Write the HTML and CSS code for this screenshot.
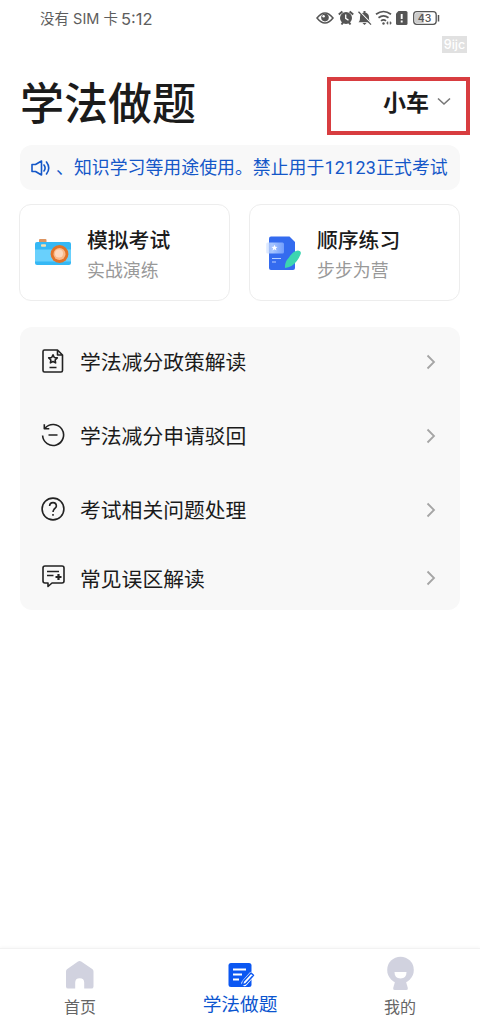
FILE: index.html
```html
<!DOCTYPE html>
<html lang="zh-CN">
<head>
<meta charset="utf-8">
<title>学法做题</title>
<link rel="stylesheet" href="styles.css">
</head>
<body>
<div class="screen">
  <div class="status">
    <span class="carrier">没有 SIM 卡</span><span class="clock">5:12</span>
    <svg class="status-icons" width="126" height="20" viewBox="315 8 126 20" fill="none" stroke="#555" stroke-width="1.5">
      <path d="M317 18q8-10 16 0q-8 10-16 0z"/><circle cx="325" cy="17.6" r="3.8" fill="#555" stroke="none"/><circle cx="323.600" cy="16.200" r="1.2" fill="#fff" stroke="none"/>
      <circle cx="346" cy="18" r="6" fill="#555" stroke="none"/><path d="M338.8 14.5l3.6-3M353.200 14.500l-3.600-3M341.500 24.500l1.500-2M350.500 24.500l-1.500-2" stroke-width="2"/><path d="M345.700 14.500v3.800l2.800 2" stroke="#fff" stroke-width="1.300"/>
      <path d="M358.500 22.300c1.500-1.300 1.500-3 1.500-5.300 0-6 9-6 9 0 0 2.300 0 4 1.500 5.300zM362.500 23h4l-2 2zM363.500 11h2v2h-2z" fill="#555" stroke="none"/><path d="M359.500 11.500l12 12.300" stroke="#fff" stroke-width="1.300"/><path d="M358.500 11.800l12.500 12.800" stroke-width="1.300"/>
      <path d="M376 14.300q7.500-5.600 15 0M378.500 17.700q5-3.800 10 0M381 20.800q2.500-2 5 0" stroke-width="1.700"/><circle cx="383.500" cy="23.500" r="1.200" fill="#555" stroke="none"/><path d="M386.500 23l1.500-1.400v2.800zM391.500 23l-1.500-1.400v2.800z" fill="#555" stroke-width=".5"/>
      <path d="M398.500 11h7.500q1.500 0 1.500 1.500v11q0 1.500-1.500 1.500h-8.500q-1.500 0-1.500-1.500v-10z" fill="#555" stroke="none"/><path d="M401.700 14v5M401.700 20.500v2" stroke="#fff" stroke-width="1.900"/>
      <rect x="413.700" y="11.700" width="22.500" height="12.600" rx="3" stroke-width="1.300"/><rect x="415" y="13" width="9" height="10" rx="1.500" fill="#ccc" stroke="none"/><path d="M438.500 15v6.500"/>
      <text x="424.500" y="22" text-anchor="middle" class="battery">43</text>
    </svg>
  </div>
  <div class="mark-row"><span class="mark">9ijc</span></div>
  <header class="header">
    <h1>学法做题</h1>
    <div class="picker"><span class="picker-text">小车</span>
      <svg width="14" height="9" viewBox="0 0 14 9" fill="none" stroke="#777" stroke-width="1.600"><path d="M1 1.500l6 5.500 6-5.500"/></svg>
    </div>
  </header>
  <div class="notice">
    <svg width="20" height="18" viewBox="0 0 20 18" fill="none" stroke="#1457c8" stroke-width="1.600" stroke-linecap="round" stroke-linejoin="round"><path d="M1 5.500h3.500L10.500 2v14l-6-3.500H1z"/><path d="M13 6q2.200 3 0 6M15.500 3q4.500 6 0 12"/></svg>
    <span class="notice-text">、知识学习等用途使用。禁止用于<span class="digits">12123</span>正式考试</span>
  </div>
  <div class="cards">
    <div class="card">
      <svg width="38" height="38" viewBox="35 233 38 38"><rect x="40" y="238" width="7.500" height="5" rx="1" fill="#dd9460"/><rect x="36" y="241" width="36" height="23" rx="2" fill="#35b8f5"/><path d="M36 248.500h36v12H36z" fill="#69d0fc"/><rect x="42" y="243.300" width="5" height="2.500" rx=".8" fill="#f5dfb0"/><circle cx="60.500" cy="253" r="8.900" fill="#e07228"/><circle cx="60.500" cy="253" r="6" fill="#fbb98a"/><circle cx="60" cy="252.500" r="4" fill="#fdd8bd"/></svg>
      <div class="card-copy"><div class="card-title">模拟考试</div><div class="card-sub">实战演练</div></div>
    </div>
    <div class="card">
      <svg width="38" height="38" viewBox="265 233 38 38"><defs><linearGradient id="tag"><stop offset="0" stop-color="#d7e5ff" stop-opacity=".55"/><stop offset=".35" stop-color="#a6c5ff"/><stop offset="1" stop-color="#729dfb"/></linearGradient></defs><path d="M272 235.500h18.500l5.500 5.500v26q0 2-2 2h-22q-2 0-2-2v-29.500q0-2 2-2z" fill="#346bef"/><rect x="267" y="241.500" width="18" height="11" rx="1.500" fill="url(#tag)"/><path d="M275.500 243.700l.9 2 2.100.2-1.600 1.400.5 2.100-1.900-1.100-1.900 1.100.5-2.100-1.600-1.400 2.100-.2z" fill="#fff"/><path d="M273 257.500h9M273 261h4" stroke="#b7d0ff" stroke-width="1.200"/><path d="M286 267q-.5-6 4-10.500 4-6.500 9-7 4 .5 2.500 4-3 7.500-9 11.500-3 1.500-6.500 2z" fill="#3cd5b0"/></svg>
      <div class="card-copy"><div class="card-title">顺序练习</div><div class="card-sub">步步为营</div></div>
    </div>
  </div>
  <div class="list">
    <div class="row">
      <svg class="row-icon" viewBox="0 0 24 24"><path d="M3.500 1h13l5 5v15.500q0 1.500-1.500 1.500H3.500Q2 23 2 21.500v-19Q2 1 3.500 1zM16.500 1v5h5M8.500 18.500h7"/><path d="M12 5.800l1.300 2.700 3 .4-2.200 2.100.5 2.900-2.600-1.400-2.600 1.400.5-2.900-2.200-2.100 3-.4z"/></svg>
      <span class="row-text">学法减分政策解读</span><svg class="chev" viewBox="0 0 10 16"><path d="M1.500 1.500L8 8l-6.500 6.500"/></svg>
    </div>
    <div class="row">
      <svg class="row-icon" viewBox="0 0 24 24"><path d="M1.600 12.500A10.500 10.500 0 1 0 4.200 5M3.300 1.300v4.500h5M7.500 12h9"/></svg>
      <span class="row-text">学法减分申请驳回</span><svg class="chev" viewBox="0 0 10 16"><path d="M1.500 1.500L8 8l-6.500 6.500"/></svg>
    </div>
    <div class="row">
      <svg class="row-icon" viewBox="0 0 24 24"><circle cx="12" cy="12" r="10.900"/><path d="M8.600 9q.2-3.400 3.400-3.400T15.400 9c0 2.400-3.400 2.600-3.400 6M12 17v1.800"/></svg>
      <span class="row-text">考试相关问题处理</span><svg class="chev" viewBox="0 0 10 16"><path d="M1.500 1.500L8 8l-6.500 6.500"/></svg>
    </div>
    <div class="row last">
      <svg class="row-icon" viewBox="0 0 24 24"><path d="M4 1h17q2 0 2 2v13q0 2-2 2H11l-4 3.500V18H4q-2 0-2-2V3q0-2 2-2zM6 6.500h12M6 10.500h6.500"/><path d="M17.500 9v6M14.500 12h6" stroke-width="2.200"/></svg>
      <span class="row-text">常见误区解读</span><svg class="chev" viewBox="0 0 10 16"><path d="M1.500 1.500L8 8l-6.500 6.500"/></svg>
    </div>
  </div>
  <nav class="tabs">
    <div class="tab">
      <svg width="30" height="30" viewBox="65 960 30 30"><path d="M78 961.600q1.600-1 3.200 0l11 7.300q1.300.9 1.300 2.500v15q0 2.200-2.200 2.200h-7.100v-6q0-4.300-4.500-4.300t-4.500 4.300v6h-7q-2.200 0-2.200-2.200v-15q0-1.600 1.300-2.500z" fill="#d1d2df"/></svg>
      <span>首页</span>
    </div>
    <div class="tab active">
      <svg width="30" height="30" viewBox="225 960 30 30"><rect x="228.500" y="963" width="23" height="24" rx="2.500" fill="#0b57f2"/><path d="M233 969.500h13M233 974.500h9M233 979.500h6" stroke="#fff" stroke-width="1.800"/><path d="M244.500 983l7-8" stroke="#fff" stroke-width="6" stroke-linecap="round"/><path d="M242.500 985l.8-3.500 7.700-8.500 2.500 2.200-7.700 8.600z" fill="#fff" stroke="#0b57f2" stroke-width="1.500" stroke-linejoin="round"/></svg>
      <span>学法做题</span>
    </div>
    <div class="tab">
      <svg width="30" height="34" viewBox="385 957 30 34"><path d="M395.500 981h10l2.300 8q.5 2-1.500 2h-11.600q-2 0-1.500-2z" fill="#d1d2df"/><circle cx="400.500" cy="971" r="13.300" fill="#d1d2df"/><path d="M394.500 973h12q0 6.500-6 6.500t-6-6.500z" fill="#fff"/></svg>
      <span>我的</span>
    </div>
  </nav>
</div>
</body>
</html>
```
FILE: styles.css
```css
* { box-sizing: border-box; }
body {
  margin: 0;
  background: #fff;
  color: #1b1b1b;
  font-family: "Noto Sans CJK SC", sans-serif;
}
svg { display: block; flex: none; }
.screen { display: flex; flex-direction: column; width: 480px; height: 1027px; overflow: hidden; white-space: nowrap; }
.status { display: flex; align-items: center; height: 36px; padding: 0 39px 0 40px; color: #5d5d5d; }
.carrier { width: 81px; font: 14.500px/36px Inter, "Noto Sans CJK SC", sans-serif; padding-top: 2px; }
.clock { font: 16.500px/36px Inter, sans-serif; padding-top: 2px; }
.status-icons { margin-left: auto; }
.battery { font: 500 10.500px Inter, sans-serif; fill: #555; stroke: none; }
.mark-row { display: flex; justify-content: flex-end; height: 17px; padding-right: 13px; }
.mark { width: 25px; height: 17px; background: #e1e1e1; color: #fff; font: 500 12.500px/18px Inter, sans-serif; text-align: center; }
.header { display: flex; justify-content: space-between; height: 92px; padding: 24px 10px 0 20px; }
h1 { margin: -2px 0 0; font-size: 44px; line-height: 52px; font-weight: 500; }
.picker { display: flex; align-items: center; justify-content: flex-end; gap: 8px; width: 143px; height: 58px; padding: 0 15px 9px 0; border: 4px solid #d83d40; font-size: 23px; font-weight: 700; line-height: 36px; }
.picker-text { margin-top: -2px; }
.notice { display: flex; align-items: center; gap: 5px; height: 45px; margin: 0 20px; padding-left: 11px; border-radius: 12px; background: #f8f8f8; color: #1457c8; font-size: 17.900px; line-height: 44px; }
.notice-text { margin-top: -1px; }
.digits { font-family: Roboto, sans-serif; letter-spacing: .3px; }
.cards { display: grid; grid-template-columns: 211px 211px; gap: 19px; margin: 14px 19px 0; }
.card { display: flex; align-items: center; gap: 15px; height: 97px; padding-left: 14px; border: 1.500px solid #ededed; border-radius: 12px; }
.card-copy { padding-top: 2px; }
.card-title { font-size: 20.800px; line-height: 30px; font-weight: 500; }
.card-sub { color: #999; font-size: 17.900px; line-height: 30px; }
.list { height: 283px; margin: 26px 20px 0; border-radius: 12px; background: #f8f8f8; }
.row { display: flex; align-items: center; height: 74px; padding: 0 24px 4px 21px; }
.row.last { height: 62px; padding-bottom: 5px; }
.row-icon { width: 24px; height: 24px; margin: -2px 15px 0 0; fill: none; stroke: #222; stroke-width: 1.600; stroke-linejoin: round; }
.row-text { flex: 1; margin-top: -2px; font-size: 20.800px; line-height: 40px; }
.last .row-text { margin-top: 0; }
.chev { width: 10px; height: 16px; fill: none; stroke: #a5a5a5; stroke-width: 1.800; }
.tabs { display: grid; grid-template-columns: repeat(3, 1fr); height: 79px; margin-top: auto; border-top: 1px solid #f2f2f2; box-shadow: 0 -1px 3px #f7f7f7; }
.tab { display: flex; flex-direction: column; align-items: center; justify-content: flex-end; color: #666; font-size: 16px; line-height: 24px; padding-bottom: 9px; gap: 4px; }
.tab.active { color: #0b55cf; font-size: 18.700px; padding-bottom: 12px; gap: 1px; }
```
